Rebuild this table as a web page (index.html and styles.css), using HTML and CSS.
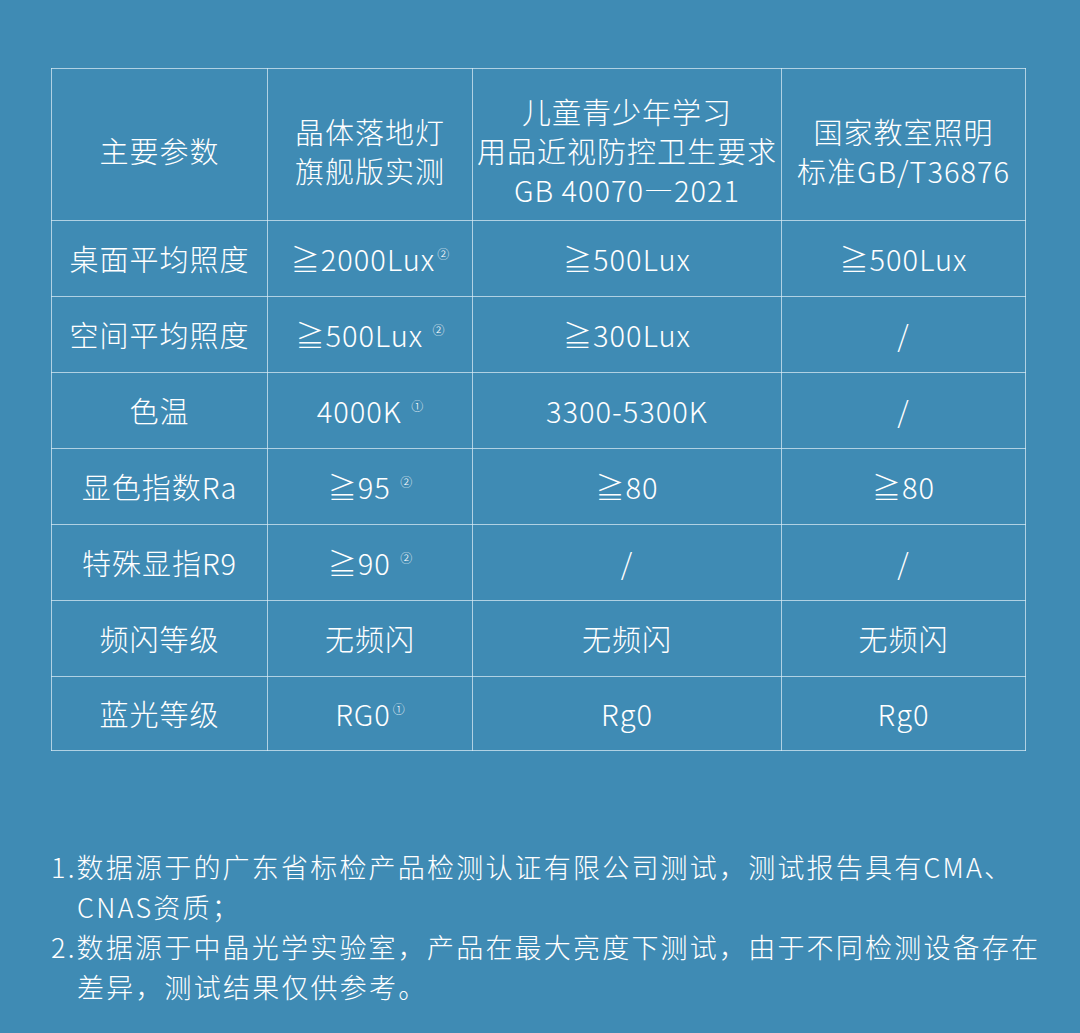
FILE: index.html
```html
<!DOCTYPE html>
<html lang="zh-CN">
<head>
<meta charset="utf-8">
<title>参数对比</title>
<link rel="stylesheet" href="styles.css">
</head>
<body>
<div class="page">
  <table class="spec">
    <colgroup>
      <col class="c1"><col class="c2"><col class="c3"><col class="c4">
    </colgroup>
    <thead>
      <tr class="head">
        <th>主要参数</th>
        <th>晶体落地灯<br>旗舰版实测</th>
        <th>儿童青少年学习<br>用品近视防控卫生要求<br>GB 40070—2021</th>
        <th>国家教室照明<br>标准GB/T36876</th>
      </tr>
    </thead>
    <tbody>
      <tr>
        <td>桌面平均照度</td>
        <td>≧2000Lux<sup>②</sup></td>
        <td>≧500Lux</td>
        <td>≧500Lux</td>
      </tr>
      <tr>
        <td>空间平均照度</td>
        <td>≧500Lux <sup>②</sup></td>
        <td>≧300Lux</td>
        <td>/</td>
      </tr>
      <tr>
        <td>色温</td>
        <td>4000K <sup>①</sup></td>
        <td>3300-5300K</td>
        <td>/</td>
      </tr>
      <tr>
        <td>显色指数Ra</td>
        <td>≧95 <sup>②</sup></td>
        <td>≧80</td>
        <td>≧80</td>
      </tr>
      <tr>
        <td>特殊显指R9</td>
        <td>≧90 <sup>②</sup></td>
        <td>/</td>
        <td>/</td>
      </tr>
      <tr>
        <td>频闪等级</td>
        <td>无频闪</td>
        <td>无频闪</td>
        <td>无频闪</td>
      </tr>
      <tr>
        <td>蓝光等级</td>
        <td>RG0<sup>①</sup></td>
        <td>Rg0</td>
        <td>Rg0</td>
      </tr>
    </tbody>
  </table>

  <div class="notes">
    <p class="note">1.数据源于的广东省标检产品检测认证有限公司测试，测试报告具有CMA、CNAS资质；</p>
    <p class="note">2.数据源于中晶光学实验室，产品在最大亮度下测试，由于不同检测设备存在差异，测试结果仅供参考。</p>
  </div>
</div>
</body>
</html>
```

FILE: styles.css
```css
html, body {
  margin: 0;
  padding: 0;
  background: #3f8bb4;
}

.page {
  width: 1080px;
  height: 1033px;
  box-sizing: border-box;
  padding: 68px 0 0 51px;
  font-family: "Noto Sans CJK SC", "Noto Sans", sans-serif;
  font-weight: 300;
  color: #ffffff;
  background: #3f8bb4;
}

.spec {
  border-collapse: collapse;
  table-layout: fixed;
  width: 974px;
}

.c1 { width: 216px; }
.c2 { width: 205px; }
.c3 { width: 309px; }
.c4 { width: 244px; }

.spec th,
.spec td {
  border: 1.5px solid rgba(220, 236, 245, 0.72);
  text-align: center;
  vertical-align: middle;
  font-size: 29px;
  font-weight: 300;
  letter-spacing: 1px;
  line-height: 39px;
  padding: 0;
  white-space: nowrap;
}

.spec .head th {
  height: 139px;
  padding-top: 12px;
}

.spec tbody td {
  height: 75px;
}

.spec tbody tr:last-child td {
  height: 73px;
}

.spec sup {
  font-size: 12px;
  letter-spacing: 0;
  vertical-align: 12px;
  line-height: 0;
  margin-left: 2px;
}

.notes {
  margin-top: 96px;
  width: 1000px;
}

.note {
  margin: 0;
  font-size: 27px;
  letter-spacing: 2.2px;
  line-height: 40px;
  padding-left: 26px;
  text-indent: -26px;
}
```
